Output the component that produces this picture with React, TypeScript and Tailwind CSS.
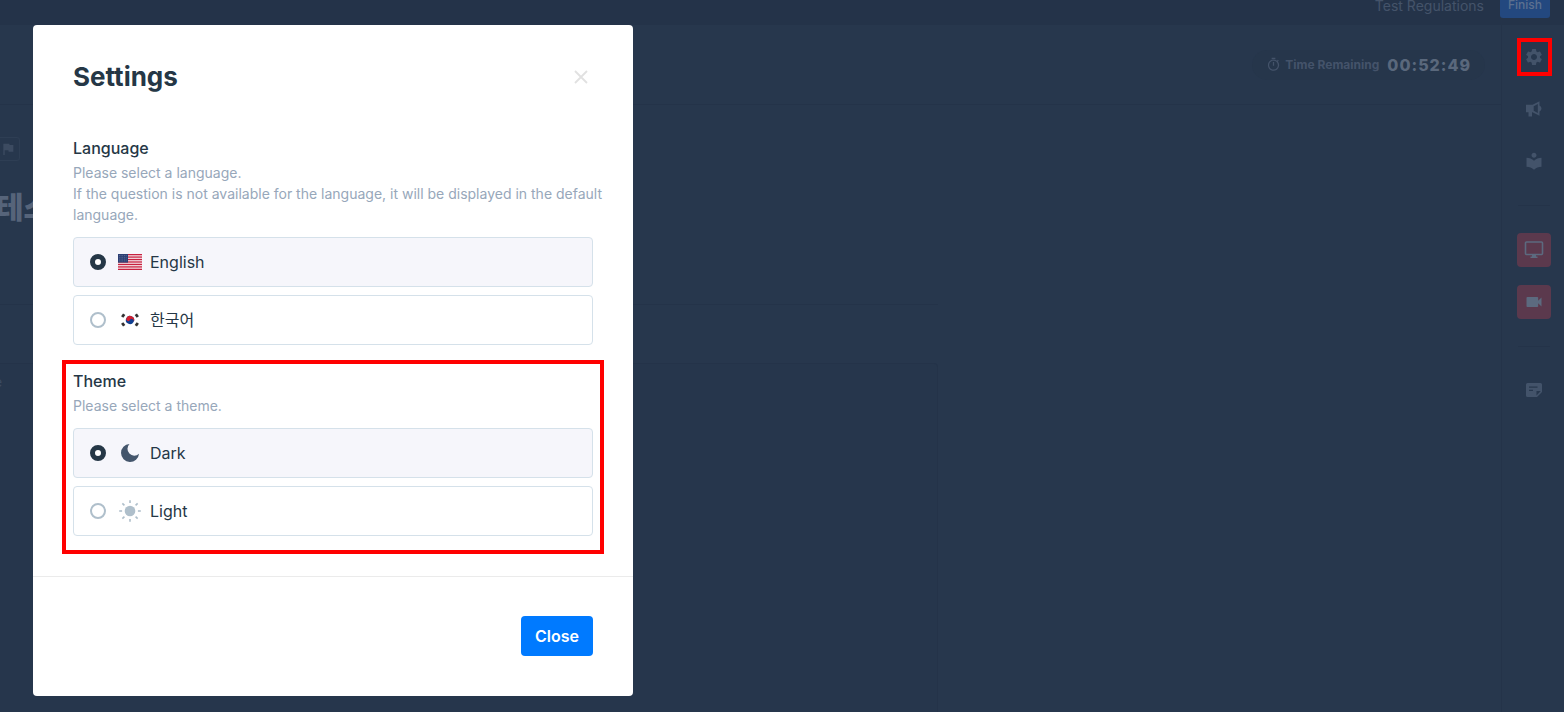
import React, { useState } from "react";
import {
  MdFlag,
  MdLocalLibrary,
  MdOutlineTimer,
  MdSettings,
  MdVideocam,
} from "react-icons/md";

interface IOptionProps {
  name: string;
  value: string;
  label: string;
  icon: React.ReactNode;
  selected: string;
  onSelect: (value: string) => void;
}

const UsFlag = () => (
  <svg width="24" height="16" viewBox="0 0 24 16" aria-hidden="true">
    <rect width="24" height="16" fill="#f3dfe4" />
    {[0, 1, 2, 3, 4, 5, 6].map((i) => (
      <rect key={i} y={i * 2.46} width="24" height="1.23" fill="#c8203f" />
    ))}
    <rect width="10" height="8.6" fill="#2c3f73" />
    {[1.5, 3.3, 5.1, 6.9].map((y) => (
      <path
        key={y}
        d={`M1 ${y}h8.4`}
        stroke="#8b97b8"
        strokeWidth="0.6"
        strokeDasharray="0.7 1"
      />
    ))}
  </svg>
);

const KrFlag = () => (
  <svg width="24" height="16" viewBox="0 0 24 16" aria-hidden="true">
    <rect width="24" height="16" fill="#fff" />
    <g transform="rotate(30 12 8)">
      <circle cx="12" cy="8" r="4.1" fill="#0f3f91" />
      <path
        d="M7.9 8a4.1 4.1 0 0 1 8.2 0a2.05 2.05 0 0 0-4.1 0a2.05 2.05 0 0 1-4.1 0z"
        fill="#d3202f"
      />
    </g>
    <g stroke="#333" strokeWidth="2.8">
      <path d="M4.2 5l2-2.8" />
      <path d="M17.8 2.2l2 2.8" />
      <path d="M4.2 11l2 2.8" />
      <path d="M17.8 13.8l2-2.8" />
    </g>
  </svg>
);

const MoonIcon = () => (
  <svg width="24" height="24" viewBox="0 0 24 24" aria-hidden="true">
    <path
      d="M11.5 3A9 9 0 1 0 21 12.7A5.9 5.9 0 0 1 11.5 3z"
      fill="#44566c"
    />
  </svg>
);

const SunIcon = () => (
  <svg width="24" height="24" viewBox="0 0 24 24" aria-hidden="true">
    <circle cx="12" cy="12" r="5.3" fill="#afbfcb" />
    <g stroke="#afbfcb" strokeWidth="1.6">
      {[0, 45, 90, 135, 180, 225, 270, 315].map((deg) => (
        <path key={deg} d="M12 1.2v2.9" transform={`rotate(${deg} 12 12)`} />
      ))}
    </g>
  </svg>
);

const MegaphoneIcon = () => (
  <svg width="18" height="18" viewBox="0 0 18 18" aria-hidden="true">
    <path
      d="M1 4.7h6.5l7-3.5v4.2a3.4 3.4 0 0 1 0 6.2v4.2l-7-3.5H7v4.2H3.500v-4.200H1zM8.700 6.200v4.600l4.100 2.100V4.100z"
      fill="#43536a"
      fillRule="evenodd"
    />
  </svg>
);

const MonitorIcon = () => (
  <svg width="20" height="20" viewBox="0 0 20 20" aria-hidden="true">
    <rect x="1.5" y="2" width="17" height="12.5" rx="1" fill="none" stroke="#5c6a7f" strokeWidth="1.6" />
    <path d="M8 15h4v1.5h1.5V18h-7v-1.5H8z" fill="#5c6a7f" />
  </svg>
);

const NoteIcon = () => (
  <svg width="18" height="18" viewBox="0 0 18 18" aria-hidden="true">
    <path
      d="M2.500 2h13A1.500 1.500 0 0 1 17 3.500V11l-5 5H2.500A1.500 1.500 0 0 1 1 14.500v-11A1.500 1.500 0 0 1 2.500 2zM4 5.500v1.300h8.500V5.500zM4 8.800v1.300h4V8.800zM11.500 14.500l4.300-4.500h-4.300z"
      fill="#43536a"
      fillRule="evenodd"
    />
  </svg>
);

const Option = ({ name, value, label, icon, selected, onSelect }: IOptionProps) => (
  <label className="flex h-[50px] cursor-pointer items-center rounded-[4px] border border-[#d5e1ea] px-4 has-checked:bg-[#f6f6fb]">
    <input
      type="radio"
      name={name}
      value={value}
      checked={selected === value}
      onChange={() => onSelect(value)}
      className="size-4 appearance-none rounded-full border-2 border-[#afbfcb] bg-white checked:border-[5px] checked:border-[#253746]"
    />
    <span className="ml-3 mr-2 flex w-6 justify-center">{icon}</span>
    <span className="text-[16px] leading-6">{label}</span>
  </label>
);

const SettingsModal = () => {
  const [language, setLanguage] = useState<string>("en");
  const [theme, setTheme] = useState<string>("dark");

  return (
    <div
      role="dialog"
      aria-labelledby="settings-title"
      className="w-full max-w-[600px] rounded-[4px] bg-white text-[#253746]"
    >
      <header className="flex items-center justify-between px-10 pt-9">
        <h1 id="settings-title" className="text-[26px] font-bold leading-8">
          Settings
        </h1>
        <button aria-label="Close settings" className="flex size-6 items-center justify-center text-[#e1e1e1]">
          <svg width="14" height="14" viewBox="0 0 14 14" aria-hidden="true">
            <path d="M1 1l12 12M13 1L1 13" stroke="currentColor" strokeWidth="1.8" />
          </svg>
        </button>
      </header>

      <fieldset className="mx-10 mt-[43px] min-w-0">
        <legend className="text-[16px] font-medium leading-6">Language</legend>
        <p className="mt-[2px] text-[14px] leading-[21px] text-[#97a7ba] sm:whitespace-nowrap">
          Please select a language.
          <br />
          If the question is not available for the language, it will be displayed in the default
          <br />
          language.
        </p>
        <div className="mt-3 flex flex-col gap-2">
          <Option name="language" value="en" label="English" icon={<UsFlag />} selected={language} onSelect={setLanguage} />
          <Option name="language" value="ko" label="한국어" icon={<KrFlag />} selected={language} onSelect={setLanguage} />
        </div>
      </fieldset>

      <div className="mx-[29px] mb-[22px] mt-[15px] border-4 border-[#ff0000] px-[7px] pb-[14px] pt-[5px]">
        <fieldset className="min-w-0">
          <legend className="text-[16px] font-medium leading-6">Theme</legend>
          <p className="mt-[2px] text-[14px] leading-[21px] text-[#97a7ba]">
            Please select a theme.
          </p>
          <div className="mt-3 flex flex-col gap-2">
            <Option name="theme" value="dark" label="Dark" icon={<MoonIcon />} selected={theme} onSelect={setTheme} />
            <Option name="theme" value="light" label="Light" icon={<SunIcon />} selected={theme} onSelect={setTheme} />
          </div>
        </fieldset>
      </div>

      <footer className="flex justify-end border-t border-[#ebebeb] px-10 pb-10 pt-[39px]">
        <button className="h-10 rounded-[4px] bg-[#007aff] px-[14px] text-[16px] font-semibold text-white">
          Close
        </button>
      </footer>
    </div>
  );
};

const Sidebar = () => (
  <aside className="flex w-[63px] shrink-0 flex-col items-center border-l border-[#243349] pl-[2px] pt-[13px] text-[#43536a]">
    <button
      aria-label="Settings"
      className="flex h-[38px] w-[35px] items-center justify-center border-4 border-[#ff0000]"
    >
      <MdSettings className="size-5 shrink-0" />
    </button>
    <div className="mt-4 flex flex-col gap-[18px]">
      <button aria-label="Announcements" className="flex size-[34px] items-center justify-center">
        <MegaphoneIcon />
      </button>
      <button aria-label="Guide" className="flex size-[34px] items-center justify-center">
        <MdLocalLibrary size={20} />
      </button>
    </div>
    <hr className="my-[27px] w-8 border-[#243349]" />
    <div className="flex flex-col gap-[18px]">
      <button aria-label="Screen share" className="flex size-[34px] items-center justify-center rounded-[4px] bg-[#5b394d]">
        <MonitorIcon />
      </button>
      <button aria-label="Camera" className="flex size-[34px] items-center justify-center rounded-[4px] bg-[#5b394d] text-[#5c6a7f]">
        <MdVideocam size={20} />
      </button>
    </div>
    <hr className="mb-[26px] mt-[27px] w-8 border-[#243349]" />
    <button aria-label="Notes" className="flex size-[34px] items-center justify-center">
      <NoteIcon />
    </button>
  </aside>
);

const App = () => {
  return (
    <main className="relative flex h-screen flex-col overflow-hidden bg-[#27374d] font-['Inter','Noto_Sans_CJK_KR',sans-serif]">
      <nav className="flex h-[25px] shrink-0 items-end justify-end gap-4 bg-[#243349] pb-[7px] pr-[14px]">
        <a href="#regulations" className="text-[14px] leading-6 text-[#44536a]">
          Test Regulations
        </a>
        <button className="h-[26px] rounded-[3px] bg-[#23487f] px-2 text-[12px] font-medium text-[#5c708f]">
          Finish
        </button>
      </nav>

      <div className="flex min-h-0 flex-1">
        <div className="flex min-w-0 flex-1 flex-col">
          <div className="flex h-20 shrink-0 items-center justify-end border-b border-[#243349] pr-4">
            <div className="flex h-[30px] items-center rounded-full bg-[#26364b] px-[14px]">
              <MdOutlineTimer size={15} className="text-[#44536a]" />
              <span className="ml-1 text-[12px] font-bold text-[#44536a]">
                Time Remaining
              </span>
              <span className="ml-2 text-[16px] font-extrabold tracking-[1px] text-[#5a687c]">
                00:52:49
              </span>
            </div>
          </div>

          <section className="flex min-h-0 w-5/8 flex-1 flex-col">
            <div className="flex h-[200px] shrink-0 flex-col items-start border-b border-[#243349] pt-8">
              <button
                aria-label="Flag question"
                className="-ml-1 flex size-6 items-center justify-center rounded-[3px] border border-[#2e3e54] text-[#3c4b61]"
              >
                <MdFlag size={16} />
              </button>
              <h2 className="-ml-1 mt-6 text-[30px] font-black leading-[44px] text-[#56647a]">테스</h2>
            </div>
            <div className="mt-[58px] flex-1 rounded-tr-[4px] border-r border-t border-[#243349] bg-[#26364c]">
              <span className="-ml-[6px] block pt-2 text-[14px] leading-5 text-[#3c4b61]">e</span>
            </div>
          </section>
        </div>
        <Sidebar />
      </div>

      <div className="absolute inset-0 px-[33px] pt-[25px]">
        <SettingsModal />
      </div>
    </main>
  );
};

export default App;
